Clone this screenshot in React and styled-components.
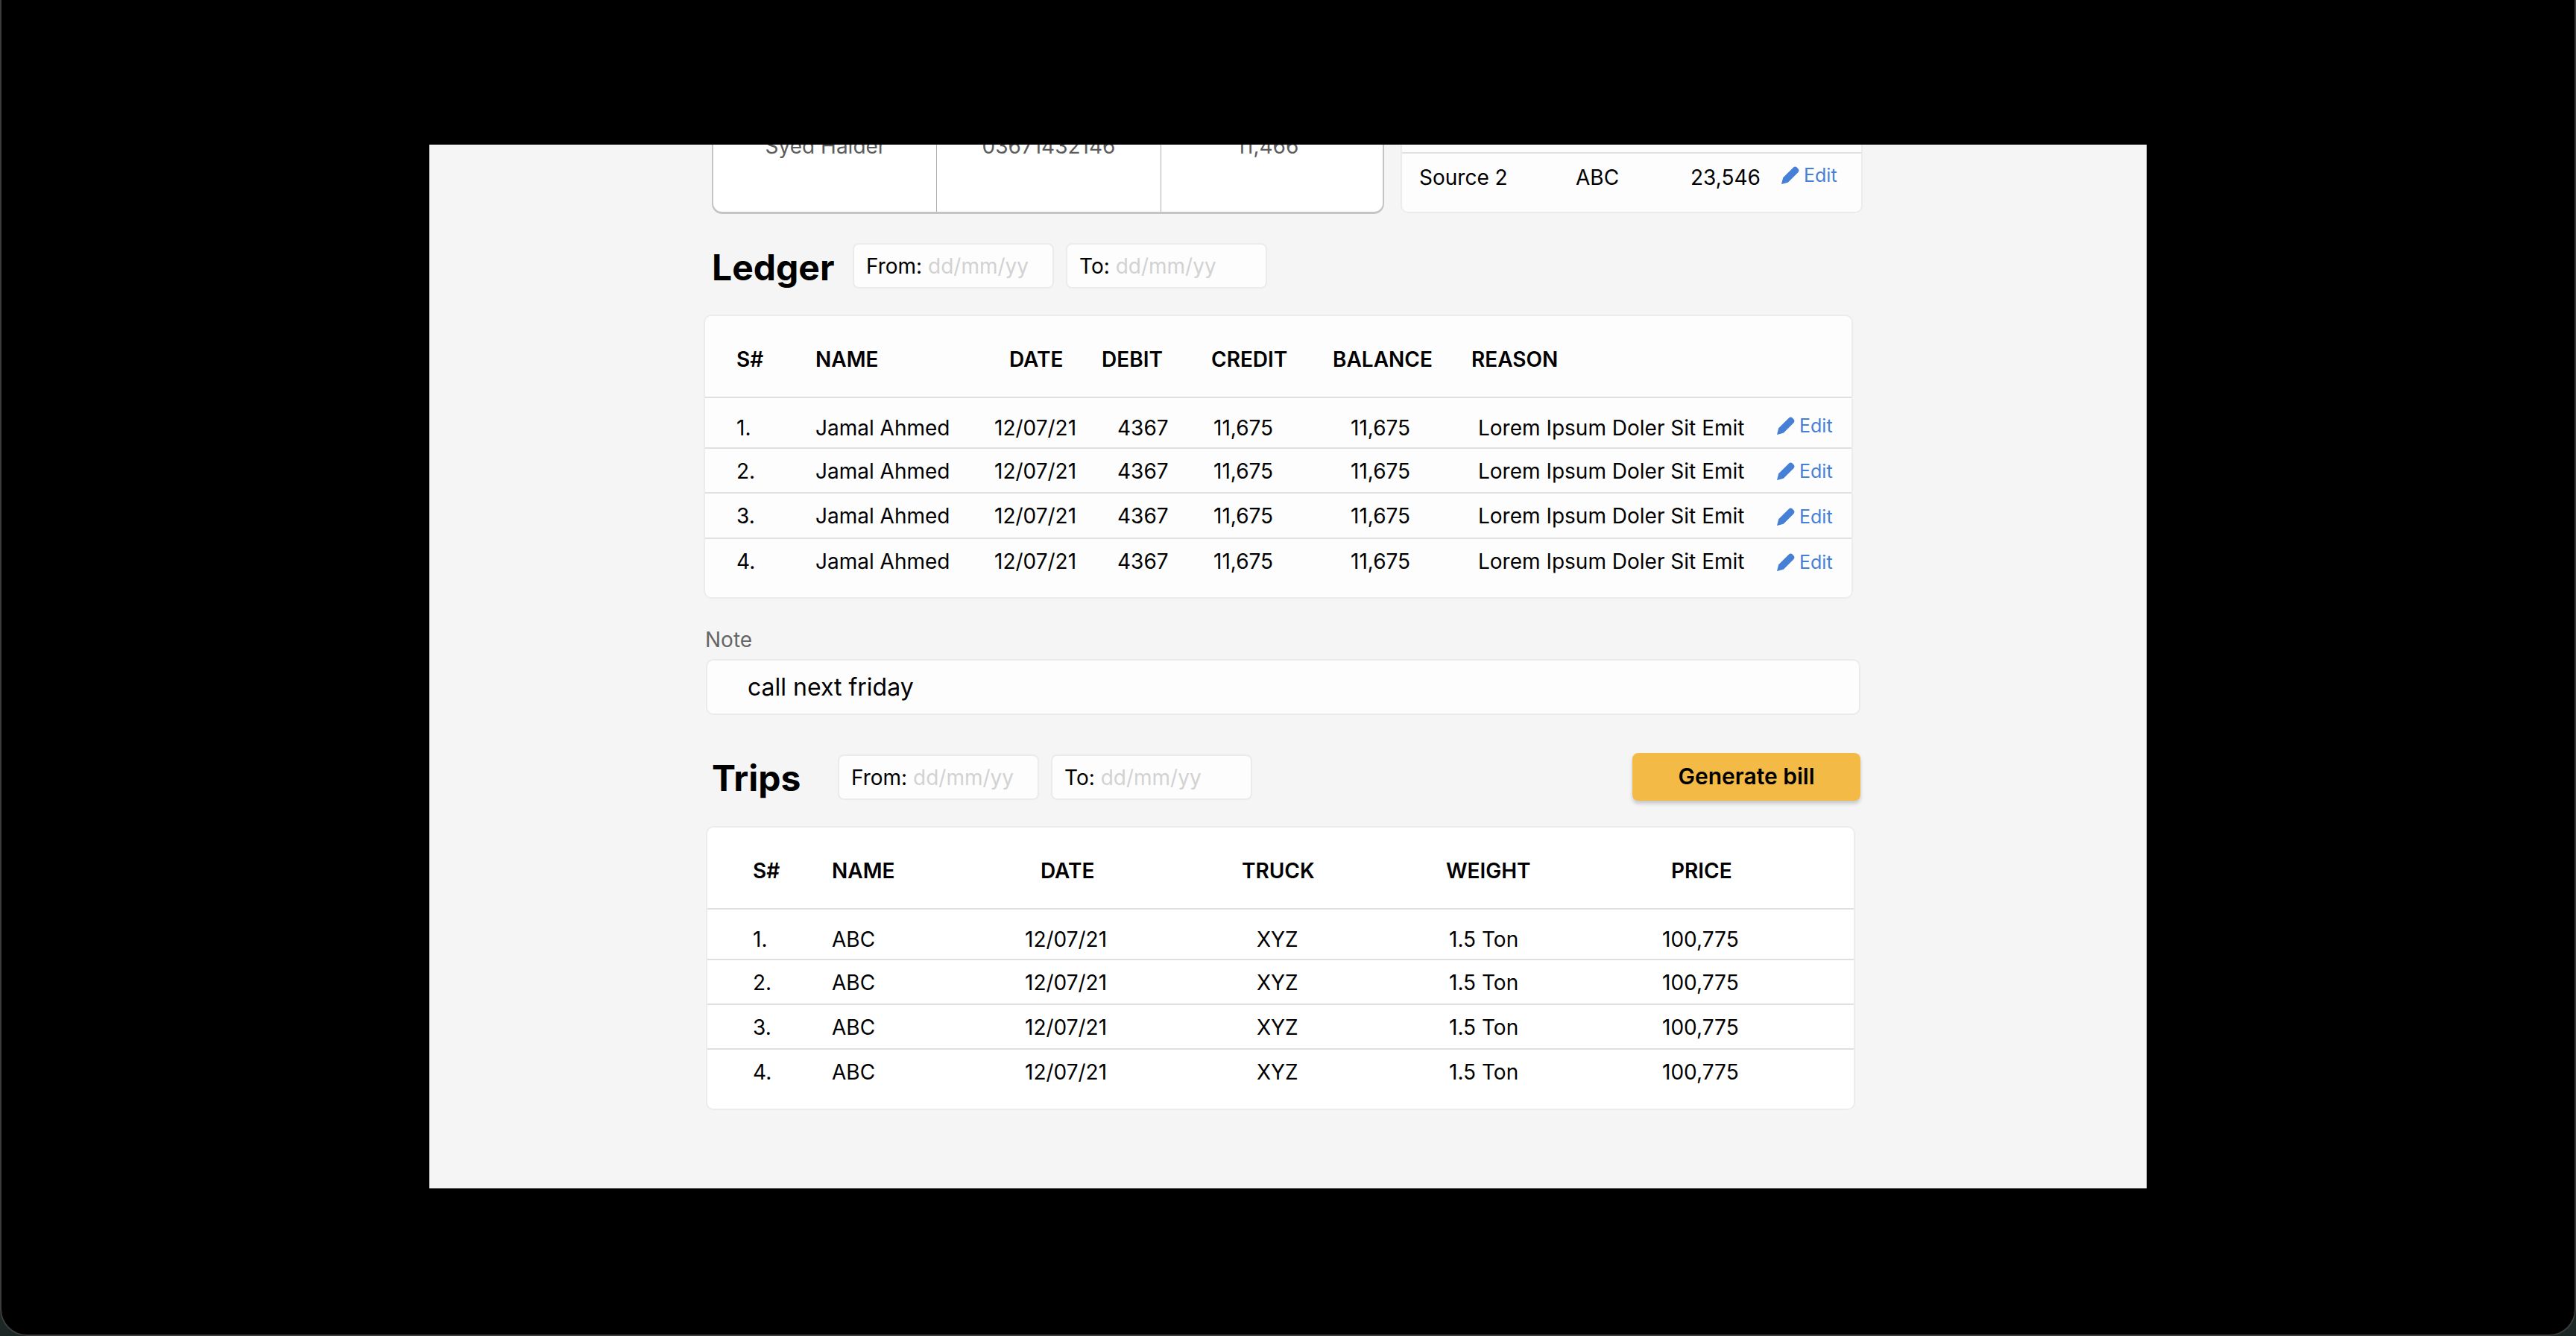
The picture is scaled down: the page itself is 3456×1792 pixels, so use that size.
import styled, { createGlobalStyle } from 'styled-components';

const GlobalStyle = createGlobalStyle`
  html, body {
    margin: 0;
    background: #1c2826;
  }
  * {
    box-sizing: border-box;
  }
`;

const Screen = styled.div`
  width: 3456px;
  height: 1792px;
  background: #000;
  border: solid #3c3c3c;
  border-width: 0 2px 2px 2px;
  border-radius: 0 0 36px 36px;
  padding-top: 194px;
  padding-left: 574px;
  font-family: Inter, 'Liberation Sans', sans-serif;
  color: #000;
  overflow: hidden;
`;

const Panel = styled.main`
  width: 2304px;
  height: 1400px;
  background: #f5f5f5;
  padding-left: 368px;
  overflow: hidden;
`;

const TopRow = styled.div`
  display: flex;
  align-items: flex-end;
  height: 93px;
  margin-left: 11px;
  gap: 22px;
  overflow: hidden;
`;

const ContactCard = styled.div`
  display: grid;
  grid-template-columns: 299px 301px 1fr;
  flex: none;
  width: 902px;
  height: 147px;
  background: #fff;
  border: 2px solid #c4c4c4;
  border-bottom-width: 3px;
  border-radius: 0 0 14px 14px;
`;

const ContactCell = styled.div`
  padding: 37px 0 0 2px;
  text-align: center;
  font-size: 28px;
  line-height: 34px;
  color: #5c5c5c;
  & + & {
    border-left: 1px solid #b0b0b0;
    padding-left: 0;
  }
  &:last-child {
    padding-right: 12px;
  }
`;

const SourceCard = styled.div`
  flex: none;
  width: 620px;
  margin-bottom: 1px;
  background: #fdfdfd;
  border: 2px solid #ececec;
  border-radius: 10px;
`;

const SourceRow = styled.div`
  display: grid;
  grid-template-columns: 210px 154px 123px auto;
  padding: 15px 0 ${(p) => (p.$last ? '29px' : '9px')} 23px;
  font-size: 28px;
  line-height: 34px;
  ${(p) => !p.$last && 'border-bottom: 2px solid #e0e0e0;'}
`;

const SectionHead = styled.div`
  display: flex;
  align-items: center;
  margin: ${(p) => p.$top}px 0 0 11px;
  width: 1541px;
  height: ${(p) => p.$height}px;
`;

const Title = styled.h2`
  flex: none;
  width: ${(p) => p.$width}px;
  margin: 0;
  padding-top: 4px;
  font-size: 48px;
  line-height: 58px;
  font-weight: 700;
`;

const DateBox = styled.div`
  flex: none;
  width: 270px;
  height: 61px;
  margin-right: 16px;
  padding: 2px 0 0 16px;
  background: #fdfdfd;
  border: 2px solid #ebebeb;
  border-radius: 8px;
  font-size: 28px;
  line-height: 55px;
  white-space: nowrap;
`;

const Placeholder = styled.span`
  color: #d2d2d2;
`;

const BillButton = styled.button`
  margin-left: auto;
  width: 306px;
  height: 64px;
  padding: 0 0 2px;
  background: #f3bb45;
  border: 0;
  border-radius: 8px;
  box-shadow: 0 4px 5px rgba(0, 0, 0, 0.18);
  font-family: inherit;
  font-size: 30px;
  font-weight: 600;
  color: #000;
`;

const TableCard = styled.section`
  width: ${(p) => p.$width}px;
  margin: ${(p) => p.$top}px 0 0 ${(p) => p.$left}px;
  height: 381px;
  background: ${(p) => p.$bg};
  border: 2px solid #ececec;
  border-radius: 10px;
`;

const Line = styled.div`
  display: grid;
  grid-template-columns: ${(p) => p.$cols};
  padding-left: ${(p) => p.$pad}px;
  font-size: 28px;
  line-height: 34px;
`;

const HeadLine = styled(Line)`
  height: 110px;
  padding-top: 8px;
  align-items: center;
  font-weight: 600;
  border-bottom: 2px solid #e0e0e0;
`;

const BodyLine = styled(Line)`
  padding-top: ${(p) => (p.$first ? '23px' : '13px')};
  padding-bottom: ${(p) => (p.$first ? '9px' : '11px')};
  ${(p) => !p.$last && 'border-bottom: 2px solid #e0e0e0;'}
`;

const EditLink = styled.a`
  display: inline-flex;
  align-items: center;
  gap: 6px;
  margin: ${(p) => p.$shift || 0}px 0 0 -1px;
  font-size: 25px;
  line-height: 34px;
  color: #4680d6;
`;

const NoteLabel = styled.label`
  display: block;
  margin: 38px 0 0 2px;
  font-size: 28px;
  line-height: 34px;
  color: #666;
`;

const NoteBox = styled.div`
  width: 1549px;
  height: 75px;
  margin: 9px 0 0 3px;
  padding-left: 54px;
  background: #fdfdfd;
  border: 2px solid #ebebeb;
  border-radius: 10px;
  font-size: 32px;
  line-height: 71px;
`;

const Pencil = () => (
  <svg width="24" height="24" viewBox="0 0 22 22" fill="currentColor" aria-hidden="true">
    <path d="M0 22 L2 14 L14.5 1.5 Q16.5 -0.5 18.5 1 L20.5 3 Q22.5 5 20.5 7.5 L8 20 L2 21.6 Z" />
  </svg>
);

const Edit = ({ shift }) => (
  <EditLink $shift={shift}>
    <Pencil />
    Edit
  </EditLink>
);

const DateRange = () => (
  <>
    <DateBox>
      From: <Placeholder>dd/mm/yy</Placeholder>
    </DateBox>
    <DateBox>
      To: <Placeholder>dd/mm/yy</Placeholder>
    </DateBox>
  </>
);

const LEDGER_HEAD = '106px 260px 124px 147px 163px 186px 1fr';
const LEDGER_BODY = '106px 240px 165px 129px 184px 171px 402px 1fr';
const TRIPS_HEAD = '106px 280px 270px 274px 302px 1fr';
const TRIPS_BODY = '106px 259px 311px 258px 286px 1fr';

const rowNumbers = ['1.', '2.', '3.', '4.'];
const editShifts = [-7, 0, 1, 1];

export default function App() {
  return (
    <>
      <GlobalStyle />
      <Screen>
        <Panel>
          <TopRow>
            <ContactCard>
              <ContactCell>Syed Haider</ContactCell>
              <ContactCell>03671432146</ContactCell>
              <ContactCell>11,466</ContactCell>
            </ContactCard>
            <SourceCard>
              <SourceRow>
                <span>Source 1</span>
                <span>ABC</span>
                <span>23,546</span>
                <Edit shift={-7} />
              </SourceRow>
              <SourceRow $last>
                <span>Source 2</span>
                <span>ABC</span>
                <span>23,546</span>
                <Edit shift={-7} />
              </SourceRow>
            </SourceCard>
          </TopRow>

          <SectionHead $top={39} $height={61}>
            <Title $width={189}>Ledger</Title>
            <DateRange />
          </SectionHead>

          <TableCard $width={1542} $top={35} $left={0} $bg="#fdfdfd">
            <HeadLine $cols={LEDGER_HEAD} $pad={42}>
              <span>S#</span>
              <span>NAME</span>
              <span>DATE</span>
              <span>DEBIT</span>
              <span>CREDIT</span>
              <span>BALANCE</span>
              <span>REASON</span>
            </HeadLine>
            {rowNumbers.map((n, i) => (
              <BodyLine
                key={n}
                $cols={LEDGER_BODY}
                $pad={42}
                $first={i === 0}
                $last={i === rowNumbers.length - 1}
              >
                <span>{n}</span>
                <span>Jamal Ahmed</span>
                <span>12/07/21</span>
                <span>4367</span>
                <span>11,675</span>
                <span>11,675</span>
                <span>Lorem Ipsum Doler Sit Emit</span>
                <Edit shift={editShifts[i]} />
              </BodyLine>
            ))}
          </TableCard>

          <NoteLabel>Note</NoteLabel>
          <NoteBox>call next friday</NoteBox>

          <SectionHead $top={51} $height={64}>
            <Title $width={169}>Trips</Title>
            <DateRange />
            <BillButton>Generate bill</BillButton>
          </SectionHead>

          <TableCard $width={1542} $top={34} $left={3} $bg="#fff">
            <HeadLine $cols={TRIPS_HEAD} $pad={61}>
              <span>S#</span>
              <span>NAME</span>
              <span>DATE</span>
              <span>TRUCK</span>
              <span>WEIGHT</span>
              <span>PRICE</span>
            </HeadLine>
            {rowNumbers.map((n, i) => (
              <BodyLine
                key={n}
                $cols={TRIPS_BODY}
                $pad={61}
                $first={i === 0}
                $last={i === rowNumbers.length - 1}
              >
                <span>{n}</span>
                <span>ABC</span>
                <span>12/07/21</span>
                <span>XYZ</span>
                <span>1.5 Ton</span>
                <span>100,775</span>
              </BodyLine>
            ))}
          </TableCard>
        </Panel>
      </Screen>
    </>
  );
}
